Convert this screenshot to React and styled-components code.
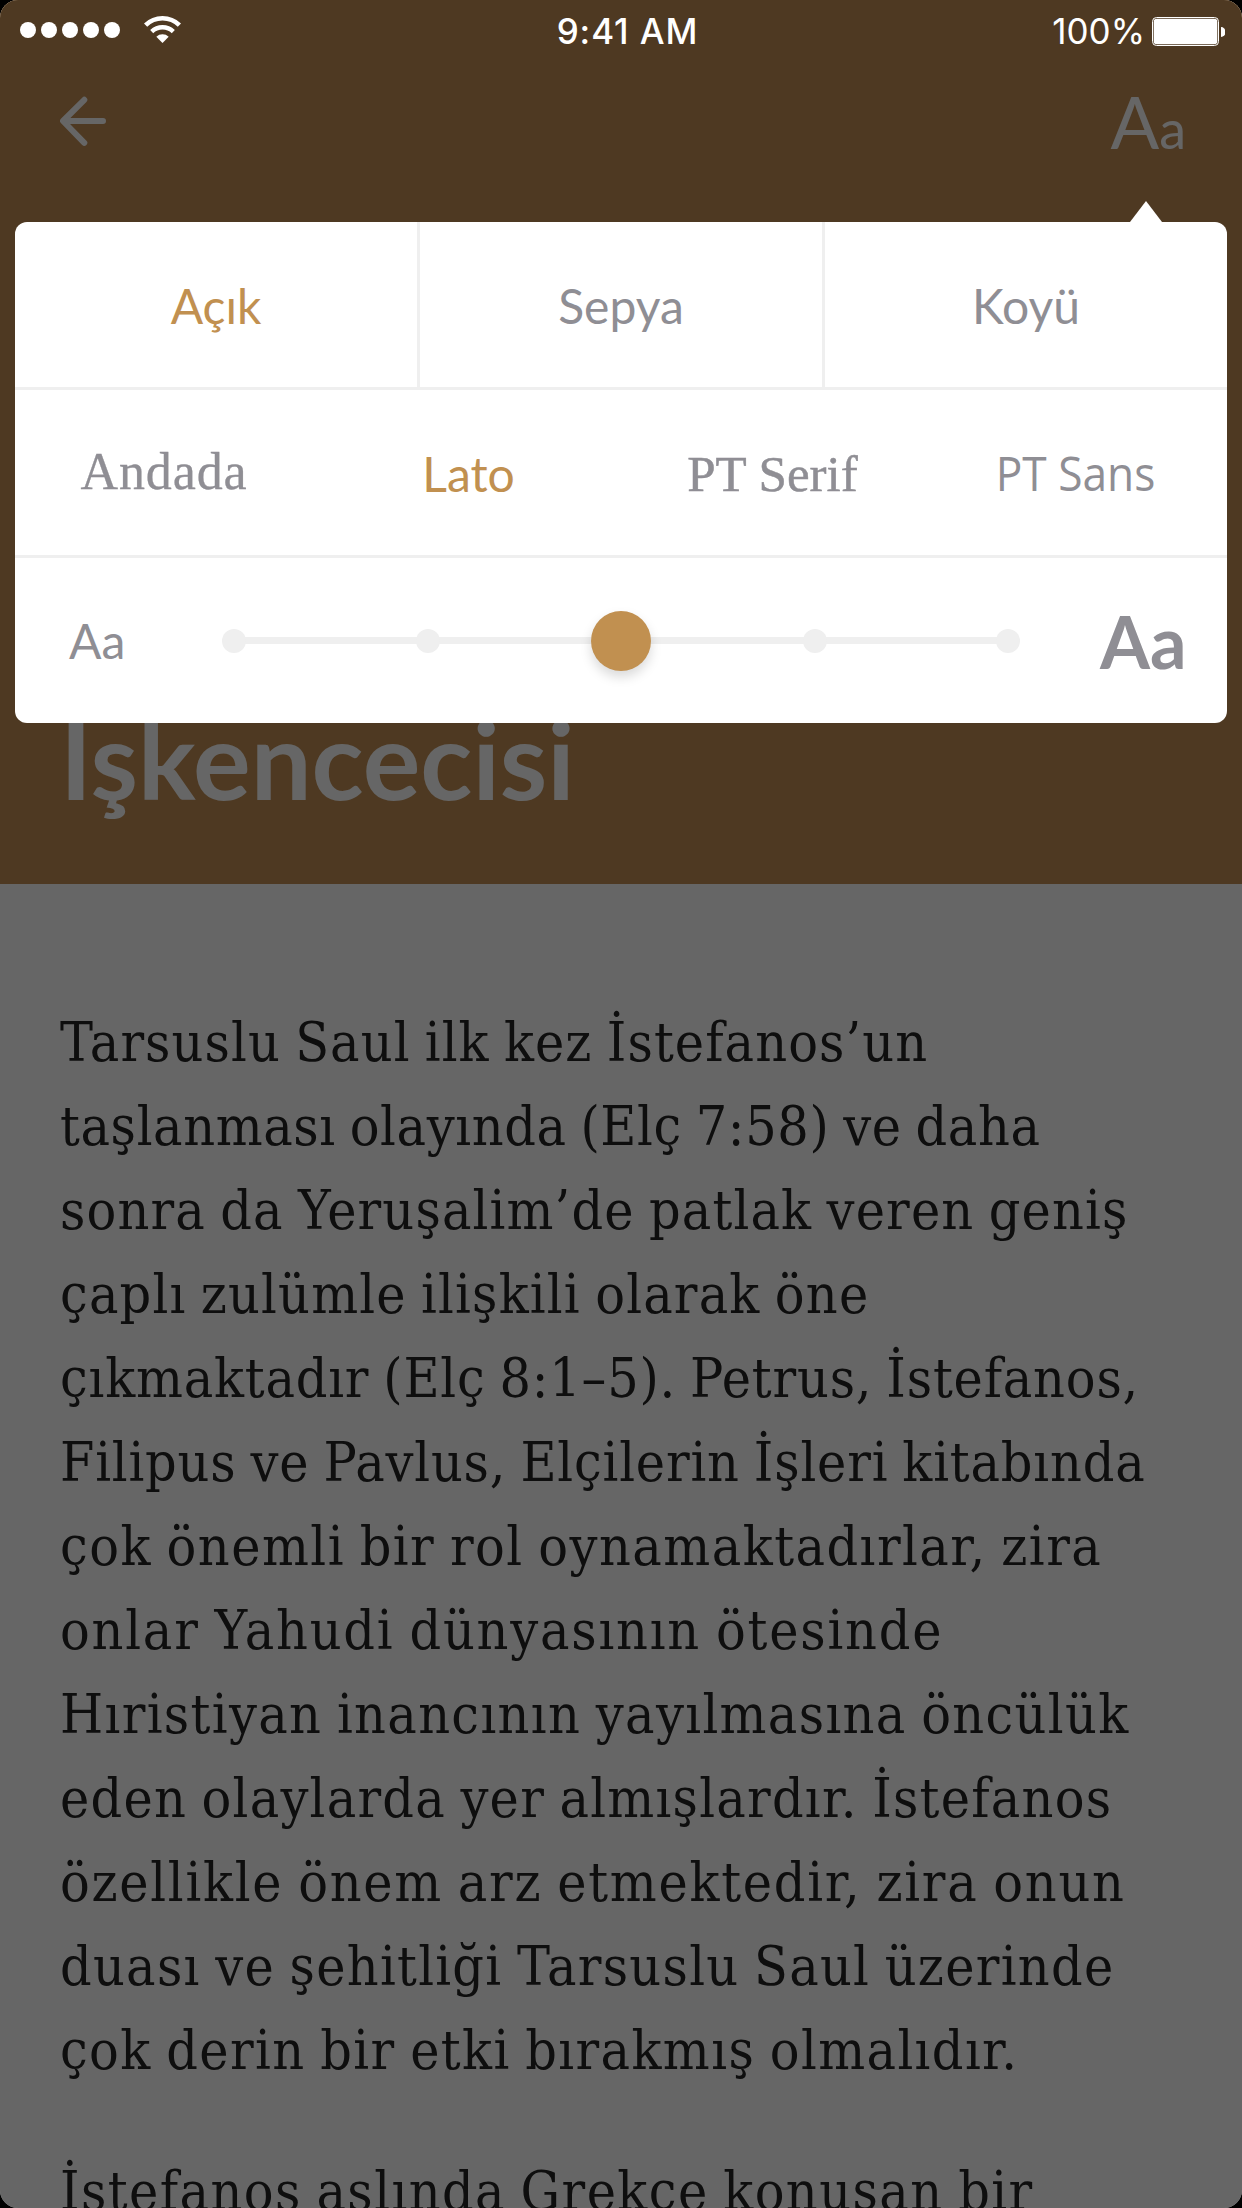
import React from "react";
import styled, { createGlobalStyle } from "styled-components";

const gold = "#c19050";
const muted = "#8f8e94";
const hairline = "#efefef";
const serif = '"Liberation Serif", serif';

const Global = createGlobalStyle`
  * { box-sizing: border-box; }
  html, body { margin: 0; background: #000; }
  body { font-family: Lato, sans-serif; overflow: hidden; }
`;

const Screen = styled.main`
  position: relative;
  width: 1242px;
  height: 2208px;
  border-radius: 18px;
  overflow: hidden;
  background: #fff;
`;

const Header = styled.header`
  height: 884px;
  padding: 60px 56px 61px 60px;
  background: #c38f55;
  color: #fff;
  display: flex;
  flex-direction: column;
  justify-content: space-between;
`;

const NavBar = styled.nav`
  display: flex;
  justify-content: space-between;
  align-items: flex-start;
`;

const BackIcon = styled.svg`
  display: block;
  margin-top: 35px;
`;

const TextSizeButton = styled.span`
  height: 124px;
  line-height: 122px;
  font-size: 72px;
`;

const SmallLetter = styled.span`
  font-size: 54px;
`;

const Title = styled.h1`
  margin: 0;
  font-size: 108px;
  font-weight: 700;
  line-height: 130px;
`;

const Article = styled.article`
  padding: 116px 0 0 60px;
  color: #242424;
  font-family: "DejaVu Serif Condensed", "DejaVu Serif", serif;
  font-stretch: condensed;
  font-size: 55px;
  line-height: 84px;
  word-spacing: -2.5px;
`;

const Paragraph = styled.p`
  margin: 0 0 57px;
`;

const Line = styled.span`
  display: block;
  white-space: nowrap;
  letter-spacing: ${(p) => p.$track}px;
`;

const Dim = styled.div`
  position: absolute;
  inset: 0;
  background: rgba(0, 0, 0, 0.6);
`;

const StatusBar = styled.div`
  position: absolute;
  top: 0;
  left: 0;
  right: 0;
  height: 60px;
  padding: 0 17px 0 20px;
  display: grid;
  grid-template-columns: 1fr auto 1fr;
  align-items: center;
  color: #fff;
  font-family: Inter, sans-serif;
  font-size: 35px;
  line-height: 62px;
`;

const Signal = styled.div`
  display: flex;
  align-items: center;
  gap: 5px;
  margin-bottom: 2px;
`;

const SignalDot = styled.i`
  width: 16px;
  height: 16px;
  border-radius: 50%;
  background: #fff;
`;

const WifiIcon = styled.svg`
  margin-left: 19px;
`;

const Clock = styled.span`
  padding-left: 10px;
  font-weight: 500;
  letter-spacing: 0.9px;
`;

const Power = styled.div`
  display: flex;
  justify-content: flex-end;
  align-items: center;
  gap: 7px;
`;

const Popover = styled.section`
  position: absolute;
  top: 222px;
  left: 15px;
  width: 1212px;
  background: #fff;
  border-radius: 12px;
  color: ${muted};
  font-size: 48px;
`;

const Pointer = styled.svg`
  position: absolute;
  top: -21px;
  left: 1115px;
`;

const Row = styled.div`
  display: flex;
  height: ${(p) => (p.$last ? 165 : 168)}px;
  border-bottom: ${(p) => (p.$last ? "none" : `3px solid ${hairline}`)};
`;

const Option = styled.button`
  display: flex;
  align-items: center;
  justify-content: center;
  margin: 0;
  padding: ${(p) => p.$pad || "1px 0 0"};
  border: 0;
  background: none;
  color: ${(p) => (p.$active ? gold : "inherit")};
  font-family: ${(p) => p.$family || "Lato, sans-serif"};
  font-size: ${(p) => p.$size || 48}px;
  letter-spacing: ${(p) => p.$track || 0}px;
  white-space: nowrap;
`;

const ThemeOption = styled(Option)`
  flex: 0 0 402px;

  & + & {
    border-left: 3px solid ${hairline};
    flex-basis: 405px;
  }
`;

const FontOption = styled(Option)`
  flex: 0 0 303px;
`;

const Label = styled.span`
  display: inline-block;
  transform: scaleX(${(p) => p.$stretch || 1});
  -webkit-text-stroke: ${(p) => p.$stroke || 0}px currentColor;
`;

const SizeRow = styled(Row)`
  align-items: center;
  padding: 0 43px 0 54px;
  justify-content: space-between;
`;

const SizeLabel = styled.span`
  width: ${(p) => (p.$large ? 84 : 153)}px;
  font-size: ${(p) => (p.$large ? 72 : 48)}px;
  font-weight: ${(p) => (p.$large ? 700 : 400)};
  white-space: nowrap;
`;

const Track = styled.div`
  flex: 0 0 798px;
  margin-right: auto;
  height: 60px;
  display: flex;
  align-items: center;
  justify-content: space-between;
  background: linear-gradient(${hairline}, ${hairline}) center / 780px 7px no-repeat;
`;

const Stop = styled.i`
  width: 24px;
  height: 24px;
  border-radius: 50%;
  background: ${hairline};
`;

const Thumb = styled.i`
  width: 60px;
  height: 60px;
  margin: 0 -18px;
  border-radius: 50%;
  background: ${gold};
  box-shadow: 0 6px 12px rgba(0, 0, 0, 0.15);
`;

const paragraphs = [
  [
    ["Tarsuslu Saul ilk kez İstefanos’un", 1.08],
    ["taşlanması olayında (Elç 7:58) ve daha", 0.63],
    ["sonra da Yeruşalim’de patlak veren geniş", 1.15],
    ["çaplı zulümle ilişkili olarak öne", 1.18],
    ["çıkmaktadır (Elç 8:1–5). Petrus, İstefanos,", 0.81],
    ["Filipus ve Pavlus, Elçilerin İşleri kitabında", 0.83],
    ["çok önemli bir rol oynamaktadırlar, zira", 1.48],
    ["onlar Yahudi dünyasının ötesinde", 1.79],
    ["Hıristiyan inancının yayılmasına öncülük", 1.35],
    ["eden olaylarda yer almışlardır. İstefanos", 1.25],
    ["özellikle önem arz etmektedir, zira onun", 1.73],
    ["duası ve şehitliği Tarsuslu Saul üzerinde", 1.29],
    ["çok derin bir etki bırakmış olmalıdır.", 1.4],
  ],
  [["İstefanos aslında Grekçe konuşan bir", 1.43]],
];

export default function App() {
  return (
    <Screen>
      <Global />
      <Header>
        <NavBar>
          <BackIcon width="48" height="52" viewBox="0 0 48 52" fill="none" stroke="#fff" strokeWidth="6" strokeLinecap="round" strokeLinejoin="round">
            <path d="M24.3 4.8 3 26 24.3 47.8M4 26H43" />
          </BackIcon>
          <TextSizeButton>
            A<SmallLetter>a</SmallLetter>
          </TextSizeButton>
        </NavBar>
        <Title>İşkencecisi</Title>
      </Header>

      <Article>
        {paragraphs.map((lines, i) => (
          <Paragraph key={i}>
            {lines.map(([text, track]) => (
              <Line key={text} $track={track}>{text}</Line>
            ))}
          </Paragraph>
        ))}
      </Article>

      <Dim />

      <StatusBar>
        <Signal>
          <SignalDot /><SignalDot /><SignalDot /><SignalDot /><SignalDot />
          <WifiIcon width="37" height="28" viewBox="0 0 37 28" fill="none" stroke="#fff">
            <path d="M1.6 9.2A24.2 24.2 0 0 1 35.4 9.2" strokeWidth="4.6" />
            <path d="M7.7 15.6A15.5 15.5 0 0 1 29.3 15.6" strokeWidth="4.4" />
            <path d="M18.5 27 12.3 20.7A9 9 0 0 1 24.7 20.7Z" fill="#fff" stroke="none" />
          </WifiIcon>
        </Signal>
        <Clock>9:41 AM</Clock>
        <Power>
          <span>100%</span>
          <svg width="73" height="29" viewBox="0 0 73 29">
            <rect x="0.5" y="0.5" width="66" height="28" rx="4" fill="none" stroke="#fff" />
            <rect x="1.7" y="1.7" width="63.6" height="25.6" rx="3" fill="#fff" />
            <path d="M69 10a4.6 5 0 0 1 0 10z" fill="#fff" />
          </svg>
        </Power>
      </StatusBar>

      <Popover>
        <Pointer width="32" height="22" viewBox="0 0 32 22">
          <path d="M16 0 32 21v1H0v-1z" fill="#fff" />
        </Pointer>
        <Row>
          <ThemeOption $active>Açık</ThemeOption>
          <ThemeOption>Sepya</ThemeOption>
          <ThemeOption>Koyü</ThemeOption>
        </Row>
        <Row>
          <FontOption $family={serif} $size={52} $track={0.9} $pad="0 5px 2px 0">
            <Label $stroke={0.3}>Andada</Label>
          </FontOption>
          <FontOption $active $pad="1px 2px 0 0">Lato</FontOption>
          <FontOption $family={serif} $size={51} $pad="3px 0 0">
            <Label $stroke={0.5}>PT Serif</Label>
          </FontOption>
          <FontOption $family='"Open Sans", sans-serif' $pad="0">
            <Label $stretch={0.922}>PT Sans</Label>
          </FontOption>
        </Row>
        <SizeRow $last>
          <SizeLabel>Aa</SizeLabel>
          <Track>
            <Stop /><Stop /><Thumb /><Stop /><Stop />
          </Track>
          <SizeLabel $large>Aa</SizeLabel>
        </SizeRow>
      </Popover>
    </Screen>
  );
}
